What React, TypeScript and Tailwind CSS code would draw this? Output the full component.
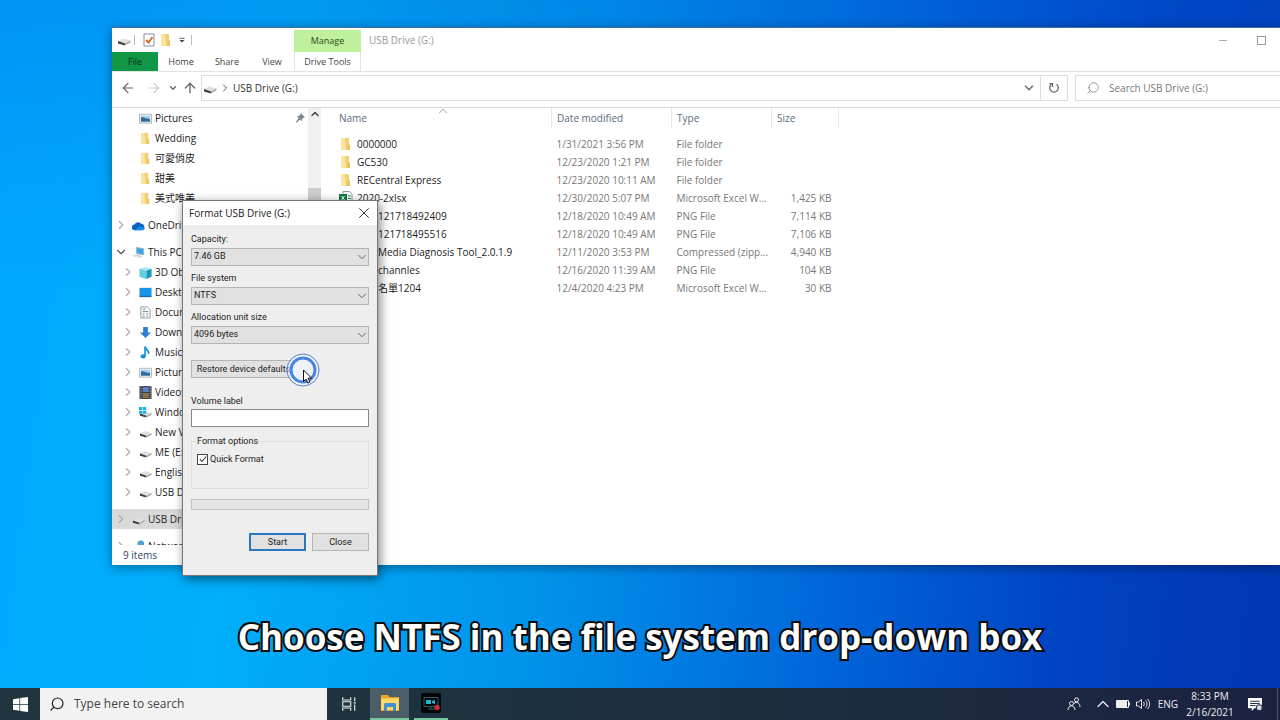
import type { ReactNode } from "react";
import { ArrowLeft, ArrowRight, ArrowUp, ChevronDown, ChevronRight, ChevronUp, Search, X } from "lucide-react";

type IconName =
  | "pictures"
  | "folder"
  | "cloud"
  | "pc"
  | "cube"
  | "desktop"
  | "document"
  | "download"
  | "music"
  | "video"
  | "windows"
  | "drive"
  | "network";

type TreeItem = {
  label: string;
  icon: IconName;
  level?: number;
  arrow?: "right" | "down";
  pinned?: boolean;
  active?: boolean;
  gap?: boolean;
};

const tree: TreeItem[] = [
  { label: "Pictures", icon: "pictures", level: 1, pinned: true },
  { label: "Wedding", icon: "folder", level: 1 },
  { label: "可愛俏皮", icon: "folder", level: 1 },
  { label: "甜美", icon: "folder", level: 1 },
  { label: "美式唯美", icon: "folder", level: 1 },
  { label: "OneDrive", icon: "cloud", arrow: "right", gap: true },
  { label: "This PC", icon: "pc", arrow: "down", gap: true },
  { label: "3D Objects", icon: "cube", level: 1, arrow: "right" },
  { label: "Desktop", icon: "desktop", level: 1, arrow: "right" },
  { label: "Documents", icon: "document", level: 1, arrow: "right" },
  { label: "Downloads", icon: "download", level: 1, arrow: "right" },
  { label: "Music", icon: "music", level: 1, arrow: "right" },
  { label: "Pictures", icon: "pictures", level: 1, arrow: "right" },
  { label: "Videos", icon: "video", level: 1, arrow: "right" },
  { label: "Windows", icon: "windows", level: 1, arrow: "right" },
  { label: "New Volume", icon: "drive", level: 1, arrow: "right" },
  { label: "ME (E:)", icon: "drive", level: 1, arrow: "right" },
  { label: "English", icon: "drive", level: 1, arrow: "right" },
  { label: "USB Drive", icon: "drive", level: 1, arrow: "right" },
  { label: "USB Drive", icon: "drive", arrow: "right", gap: true, active: true },
  { label: "Network", icon: "network", arrow: "right", gap: true },
];

type FileRow = {
  name: string;
  icon?: "folder" | "excel";
  date: string;
  type: string;
  size?: string;
};

// rows without an icon start behind the dialog
const files: FileRow[] = [
  { name: "0000000", icon: "folder", date: "1/31/2021 3:56 PM", type: "File folder" },
  { name: "GC530", icon: "folder", date: "12/23/2020 1:21 PM", type: "File folder" },
  { name: "RECentral Express", icon: "folder", date: "12/23/2020 10:11 AM", type: "File folder" },
  { name: "2020-2xlsx", icon: "excel", date: "12/30/2020 5:07 PM", type: "Microsoft Excel W...", size: "1,425 KB" },
  { name: "121718492409", date: "12/18/2020 10:49 AM", type: "PNG File", size: "7,114 KB" },
  { name: "121718495516", date: "12/18/2020 10:49 AM", type: "PNG File", size: "7,106 KB" },
  { name: "Media Diagnosis Tool_2.0.1.9", date: "12/11/2020 3:53 PM", type: "Compressed (zipp...", size: "4,940 KB" },
  { name: "channles", date: "12/16/2020 11:39 AM", type: "PNG File", size: "104 KB" },
  { name: "名單1204", date: "12/4/2020 4:23 PM", type: "Microsoft Excel W...", size: "30 KB" },
];

function Svg({ className, children }: { className: string; children: ReactNode }) {
  return (
    <svg viewBox="0 0 14 14" className={`shrink-0 ${className}`} fill="none" aria-hidden="true">
      {children}
    </svg>
  );
}

function DriveShape() {
  return (
    <>
      <path d="M1 8 6 5.500 13.500 7.500 8 10.500Z" fill="#e0e0e0" />
      <path d="M1 8 8 10.500V12.500L1 10.500Z" fill="#3c3c3c" />
      <path d="M8 10.500 13.500 7.500V9.500L8 12.500Z" fill="#aaa" />
    </>
  );
}

function Icon({ name, className = "size-3.5" }: { name: IconName; className?: string }) {
  switch (name) {
    case "pictures":
      return (
        <Svg className={className}>
          <path d="M.5 2.500h13v9.500H.5z" fill="#f4f8fb" stroke="#a9b4bc" />
          <path d="M2 4h10v3.500H2z" fill="#9fd0f0" />
          <path d="M2 6c3-1 4 1.500 10 1.500v3H2z" fill="#386b95" />
        </Svg>
      );
    case "folder":
      return (
        <Svg className={className}>
          <path d="M2.500 1h7.500v12H2.500z" fill="#f3cf73" />
          <path d="M2.500 1h3.500l1 12H2.500z" fill="#fbe3a0" />
          <path d="M9 7.500h2V13H8z" fill="#f0c45d" />
        </Svg>
      );
    case "cloud":
      return (
        <Svg className={className}>
          <path d="M3 12a3 3 0 0 1-.3-6A4.200 4.200 0 0 1 10 5.200 3.500 3.500 0 0 1 11 12Z" fill="#0a64c4" />
          <path d="M3 12 9 8l5 2a3 3 0 0 1-3 2Z" fill="#1d8ee6" />
        </Svg>
      );
    case "pc":
      return (
        <Svg className={className}>
          <path d="M5 1.500 12.500 3v6.500L5 8z" fill="#3fa3e8" stroke="#8fb4cc" />
          <path d="M0 10.500 5 9l6 2-4 2z" fill="#c3ccd2" />
          <path d="m3 10.500 5 1.500" stroke="#fff" />
        </Svg>
      );
    case "cube":
      return (
        <Svg className={className}>
          <path d="M.5 3 7 1l6.500 2L8 5z" fill="#a8eaf2" />
          <path d="M.5 3 8 5v9L.5 11.500z" fill="#63cfe0" />
          <path d="M8 5l5.500-2v8.500L8 14z" fill="#1798b5" />
        </Svg>
      );
    case "desktop":
      return (
        <Svg className={className}>
          <path d="M.5 2h13v9H.5z" fill="#1795e6" />
          <path d="M.5 10.500h13V12H.5z" fill="#1269b0" />
        </Svg>
      );
    case "document":
      return (
        <Svg className={className}>
          <path d="M2 1h7l3 3v9H2z" fill="#f8fafb" stroke="#8e999f" />
          <path d="M4 3.500h3M4 6h6M4 8.500h2m2 0h2m-6 2.500h2m2 0h2" stroke="#6c8798" />
        </Svg>
      );
    case "download":
      return (
        <Svg className={className}>
          <path d="M4.500 1h5v6H13l-6 6-6-6h3.500z" fill="#2c7fd0" />
        </Svg>
      );
    case "music":
      return (
        <Svg className={className}>
          <path d="M6.500 11V.5C7 4.500 12 4.500 10 8.500" stroke="#1591d8" strokeWidth="1.800" />
          <ellipse cx="4.500" cy="11.200" rx="2.800" ry="2.300" fill="#1591d8" />
        </Svg>
      );
    case "video":
      return (
        <Svg className={className}>
          <path d="M.5 0h13v14H.5z" fill="#3c3f4a" />
          <path d="M4 1h6.500v5.500H4z" fill="#5b7fc0" />
          <path d="M4 7.500h6.500V13H4z" fill="#8b7448" />
          <path d="M2.200 0v14m9.800-14v14" stroke="#d8d8d8" strokeDasharray="1 1.500" />
        </Svg>
      );
    case "windows":
      return (
        <Svg className={className}>
          <DriveShape />
          <path d="M0 1h3.500v3.300H0zM4.200 1h3.500v3.300H4.200zM0 5h3.500v3.300H0zM4.200 5h3.500v3.300H4.200z" fill="#12b2ea" />
        </Svg>
      );
    case "network":
      return (
        <Svg className={className}>
          <path d="M6 3.500a3.500 3.500 0 0 1 7 1V10H6z" fill="#4a9fd4" />
          <path d="M1 5.500 8 7v6L1 11.500z" fill="#2a86c6" />
        </Svg>
      );
    default:
      return (
        <Svg className={className}>
          <DriveShape />
        </Svg>
      );
  }
}

function ExcelIcon() {
  return (
    <Svg className="size-3.5">
      <path d="M4 .5h6.500L13 3v10H4z" fill="#fff" stroke="#8ca096" />
      <path d="M9 5h3M9 7.500h3M9 10h3" stroke="#2c8a5b" />
      <path d="M0 3h8v8H0z" fill="#107c41" />
      <path d="m2.500 5 3 4m0-4-3 4" stroke="#fff" />
    </Svg>
  );
}

function RibbonHeader() {
  return (
    <header className="text-[9px] text-[#444]">
      <div className="flex h-6 items-center">
        <div className="flex h-full w-[182px] items-center gap-[3px] pl-[5px]">
          <Icon name="drive" />
          <span className="h-2.5 w-px bg-[#bbb]" />
          <button className="ml-1" aria-label="Properties">
            <Svg className="size-3.5">
              <path d="M2 1h10v12H2z" fill="#fff" stroke="#8a8f98" />
              <path d="m4 7 2.500 2.500L10.500 4" stroke="#d9622b" strokeWidth="1.800" />
            </Svg>
          </button>
          <button aria-label="New folder">
            <Icon name="folder" />
          </button>
          <button aria-label="Customize Quick Access Toolbar">
            <Svg className="size-3">
              <path d="M4 5h6" stroke="#444" />
              <path d="M4 7h6l-3 3z" fill="#444" />
            </Svg>
          </button>
          <span className="h-2.5 w-px bg-[#bbb]" />
        </div>
        <div className="flex h-[22px] w-[67px] items-center justify-center self-end bg-[#bff09b] text-[#2f4a22]">Manage</div>
        <h1 className="ml-2 text-[10px] text-[#999]">USB Drive (G:)</h1>
        <div className="ml-auto flex">
          <button className="grid h-6 w-[38px] place-items-center" aria-label="Minimize">
            <span className="h-px w-2 bg-[#aaa]" />
          </button>
          <button className="grid h-6 w-[38px] place-items-center" aria-label="Maximize">
            <span className="size-[9px] border border-[#999]" />
          </button>
        </div>
      </div>
      <nav className="flex h-5 border-b border-[#e3e3e3]">
        <button className="w-[46px] bg-[#119645] text-[#0b2d17]">File</button>
        <button className="w-[46px]">Home</button>
        <button className="w-[46px]">Share</button>
        <button className="w-11">View</button>
        <button className="w-[67px] border-x border-[#e3e3e3]">Drive Tools</button>
      </nav>
    </header>
  );
}

function AddressBar() {
  return (
    <div className="flex h-9 items-center border-b border-[#d9d9d9] pb-[3px] text-[10px]">
      <div className="flex w-[89px] items-center pl-2 text-[#666]">
        <button aria-label="Back">
          <ArrowLeft className="size-4" strokeWidth={1.8} />
        </button>
        <button className="ml-2.5 text-[#ccc]" aria-label="Forward">
          <ArrowRight className="size-4" strokeWidth={1.8} />
        </button>
        <button className="ml-1.5" aria-label="Recent locations">
          <ChevronDown className="size-2.5" strokeWidth={3} />
        </button>
        <button className="ml-1" aria-label="Up">
          <ArrowUp className="size-4" strokeWidth={2} />
        </button>
      </div>
      <div className="flex h-[26px] flex-1 items-center border border-[#dedede] pl-px text-[#333]">
        <Icon name="drive" />
        <ChevronRight className="ml-0.5 size-3 text-[#555]" />
        <button className="ml-0.5">USB Drive (G:)</button>
        <button className="ml-auto mr-1" aria-label="Previous locations">
          <ChevronDown className="size-3.5 text-[#777]" strokeWidth={3} />
        </button>
        <button className="grid h-full w-[27px] place-items-center border-l border-[#dedede]" aria-label="Refresh">
          <Svg className="size-3.5">
            <path d="M9.500 3.300a4.300 4.300 0 1 1-5 0" stroke="#666" strokeWidth="1.300" />
            <path d="M2.500 2.700H5.500V6" stroke="#666" strokeWidth="1.300" />
          </Svg>
        </button>
      </div>
      <label className="ml-[7px] flex h-[26px] w-[205px] items-center border border-r-0 border-[#dedede] pl-2.5">
        <Search className="size-3.5 -scale-x-100 text-[#888]" strokeWidth={1.5} />
        <input
          className="ml-[9px] w-40 outline-none placeholder:text-[#777]"
          aria-label="Search USB Drive (G:)"
          placeholder="Search USB Drive (G:)"
        />
      </label>
    </div>
  );
}

function TreeRow({ item }: { item: TreeItem }) {
  return (
    <li
      className={`flex h-5 shrink-0 items-center whitespace-nowrap ${item.level ? "pl-[9px]" : "pl-0.5"} ${item.gap ? "mt-[7px]" : ""} ${
        item.active ? "bg-[#d9d9d9]" : ""
      }`}
    >
      <span className="flex w-[18px] text-[#aaa]">
        {item.arrow === "right" && <ChevronRight className="size-3.5" />}
        {item.arrow === "down" && <ChevronDown className="size-3.5 text-[#555]" />}
      </span>
      <Icon name={item.icon} className="size-[13px]" />
      <span className="ml-[3px]">{item.label}</span>
      {item.pinned && (
        <Svg className="ml-auto mr-[3px] size-2.5">
          <path d="M8 0 14 6l-2 .5-2 2-.5 3L7 9l-5.500 5L1 13l4-6-2.500-2.500L6 4l1.500-2z" fill="#7c8794" />
        </Svg>
      )}
    </li>
  );
}

function Sidebar() {
  return (
    <aside className="flex w-[209px] shrink-0 overflow-hidden text-[#222]">
      <ul className="flex w-[196px] flex-col">
        {tree.map((item, i) => (
          <TreeRow key={i} item={item} />
        ))}
      </ul>
      <div className="flex w-[13px] flex-col items-center bg-[#f0f0f0]">
        <ChevronUp className="size-3 text-[#444]" strokeWidth={3} />
        <span className="mt-[68px] h-40 w-full bg-[#cdcdcd]" />
      </div>
    </aside>
  );
}

function FileTable() {
  return (
    <main className="flex-1">
      <table className="w-[518px] table-fixed text-left text-[#777]">
        <colgroup>
          <col />
          <col className="w-[120px]" />
          <col className="w-[100px]" />
          <col className="w-[67px]" />
        </colgroup>
        <thead>
          <tr className="h-5 text-[#5a6b80]">
            <th className="relative border-r border-[#e8e8e8] pl-[18px] font-normal">
              Name
              <ChevronUp className="absolute -top-1 left-[115px] size-3.5 text-[#888]" strokeWidth={1.5} />
            </th>
            <th className="border-r border-[#e8e8e8] pl-[5px] font-normal">Date modified</th>
            <th className="border-r border-[#e8e8e8] pl-[5px] font-normal">Type</th>
            <th className="border-r border-[#e8e8e8] pl-[5px] font-normal">Size</th>
          </tr>
          <tr className="h-[7px]" />
        </thead>
        <tbody>
          {files.map((file) => (
            <tr key={file.name} className="h-[18px] whitespace-nowrap">
              <td className="text-[#222]">
                <div className={`flex items-center ${file.icon ? "gap-1 pl-[18px]" : "pl-[57px]"}`}>
                  {file.icon === "folder" && <Icon name="folder" />}
                  {file.icon === "excel" && <ExcelIcon />}
                  {file.name}
                </div>
              </td>
              <td className="pl-[5px]">{file.date}</td>
              <td className="pl-[5px]">{file.type}</td>
              <td className="pr-[7px] text-right">{file.size}</td>
            </tr>
          ))}
        </tbody>
      </table>
    </main>
  );
}

function ExplorerWindow() {
  return (
    <section className="absolute bottom-[123px] left-28 right-0 top-[27px] flex flex-col border-t border-[#3a6ea8] bg-white text-[10px] shadow-[0_2px_10px_rgba(0,0,0,0.4)]">
      <RibbonHeader />
      <AddressBar />
      <div className="flex min-h-0 flex-1">
        <Sidebar />
        <FileTable />
      </div>
      <footer className="flex h-5 items-center pl-[11px] text-[#2f4668]">9 items</footer>
    </section>
  );
}

function SelectField({ id, label, value }: { id: string; label: string; value: string }) {
  return (
    <div className="mb-1.5">
      <label htmlFor={id} className="block leading-3">
        {label}
      </label>
      <div className="mt-[3px] grid items-center">
        <select id={id} className="col-start-1 row-start-1 h-[18px] appearance-none border border-[#b5b5b5] bg-[#e1e1e1] pl-0.5">
          <option>{value}</option>
        </select>
        <ChevronDown className="pointer-events-none col-start-1 row-start-1 size-3.5 justify-self-end text-[#555]" strokeWidth={1.5} />
      </div>
    </div>
  );
}

function FormatDialog() {
  return (
    <section
      role="dialog"
      aria-label="Format USB Drive (G:)"
      className="absolute left-[182px] top-[200px] w-[196px] border border-[#777] bg-[#eee] text-[#222] shadow-[2px_3px_10px_rgba(0,0,0,0.5)]"
    >
      <div className="flex h-6 items-center justify-between bg-white pl-1.5 pr-1 text-[10px]">
        <h2>Format USB Drive (G:)</h2>
        <button aria-label="Close dialog">
          <X className="size-[18px]" strokeWidth={1.2} />
        </button>
      </div>
      <form className="px-2 pb-6 pt-2 font-[Roboto,sans-serif] text-[9px]">
        <SelectField id="capacity" label="Capacity:" value="7.46 GB" />
        <SelectField id="file-system" label="File system" value="NTFS" />
        <SelectField id="unit-size" label="Allocation unit size" value="4096 bytes" />
        <button type="button" className="mt-2.5 h-[18px] w-[105px] whitespace-nowrap border border-[#b5b5b5] bg-[#e1e1e1] leading-4">
          Restore device defaults
        </button>
        <label htmlFor="volume" className="mt-[17px] block leading-3">
          Volume label
        </label>
        <input id="volume" className="mt-0.5 h-[18px] w-full border border-[#888] bg-white px-1" />
        <fieldset className="mt-2 h-[54px] border border-[#dedede] pl-[5px]">
          <legend className="leading-3">Format options</legend>
          <label className="mt-1.5 flex items-center gap-0.5 leading-3">
            <span className="grid place-items-center">
              <input type="checkbox" defaultChecked className="col-start-1 row-start-1 size-[11px] appearance-none border border-[#444] bg-white" />
              <Svg className="pointer-events-none col-start-1 row-start-1 size-2.5">
                <path d="m2.500 7 3 3.500 6-7" stroke="#333" strokeWidth="1.500" />
              </Svg>
            </span>
            Quick Format
          </label>
        </fieldset>
        <div role="progressbar" aria-label="Format progress" className="mt-2.5 h-[11px] border border-[#c4c4c4] bg-[#e4e4e4]" />
        <div className="mt-[23px] flex justify-end gap-1.5">
          <button type="button" className="h-[18px] w-[57px] border-2 border-[#2a77c0] bg-[#e1e1e1] leading-3">
            Start
          </button>
          <button type="button" className="h-[18px] w-[57px] border border-[#b5b5b5] bg-[#e1e1e1] leading-3">
            Close
          </button>
        </div>
      </form>
    </section>
  );
}

function ClickCursor() {
  return (
    <svg viewBox="0 0 36 36" className="absolute left-[285px] top-[352px] size-9" fill="none" aria-hidden="true">
      <circle cx="18" cy="18" r="16" fill="#fff" fillOpacity="0.5" stroke="#4a7fd4" />
      <circle cx="18" cy="18" r="12" fill="#edf1fa" stroke="#4a84e4" strokeWidth="3" />
      <path d="M18.500 18v11.500l2.600-2.400 1.800 4 2-1-1.800-3.900h3.600z" fill="#fff" stroke="#111" />
    </svg>
  );
}

function Taskbar() {
  return (
    <footer className="flex h-8 items-center bg-linear-to-r from-[#20353f] via-[#1e3040] to-[#1a2240] text-[#eee]">
      <button className="grid w-10 place-items-center" aria-label="Start menu">
        <Svg className="size-[15px]">
          <path d="M0 2 6 1.100v5.400H0zM6.700 1 14 0v6.500H6.700zM0 7.300h6v5.500L0 12zM6.700 7.300H14V14l-7.300-1z" fill="#fff" />
        </Svg>
      </button>
      <label className="flex h-full w-[287px] items-center bg-[#f2f2f2] pl-[9px]">
        <Search className="size-4 -scale-x-100 text-[#222]" strokeWidth={1.8} />
        <input
          className="ml-[9px] w-56 text-[12px] outline-none placeholder:text-[#444]"
          aria-label="Type here to search"
          placeholder="Type here to search"
        />
      </label>
      <button className="grid w-[43px] place-items-center" aria-label="Task view">
        <Svg className="size-4">
          <path d="M1.500 1v2.500h7V1M1.500 5h7v4h-7zM1.500 13v-2.500h7V13M12 1v3.500M12 7.500V13M11 6h2" stroke="#e8e8e8" />
        </Svg>
      </button>
      <button className="grid h-full w-[39px] place-items-center border-b-2 border-[#76c79c] bg-[#4b5d67]" aria-label="File Explorer">
        <svg viewBox="0 0 18 16" className="h-4 w-[18px]" aria-hidden="true">
          <path d="M0 0h7l1.500 2H18v14H0z" fill="#e9a823" />
          <path d="M0 3.500h18V15H0z" fill="#ffd968" />
          <path d="M3 9.500A1.500 1.500 0 0 1 4.500 8h9A1.500 1.500 0 0 1 15 9.500V16h-3v-4H6v4H3z" fill="#3f8fd2" />
        </svg>
      </button>
      <button className="ml-[5px] grid h-full w-[34px] place-items-center border-b-2 border-[#76c79c]" aria-label="RECentral">
        <svg viewBox="0 0 20 20" className="size-5" fill="none" aria-hidden="true">
          <rect width="20" height="20" rx="2" fill="#050608" />
          <path d="M3 4.500h14v9H3zM7 16h6M10 13.500V16" stroke="#33596e" />
          <path d="M5 7h5v4H5zM11 8l3-1v4l-3-1z" fill="#22b5d0" />
          <circle cx="16" cy="14.500" r="2.800" fill="#c2313c" />
        </svg>
      </button>
      <div className="ml-auto flex h-full items-center text-[10px]">
        <button aria-label="People">
          <Svg className="size-3.5">
            <circle cx="9.500" cy="2.800" r="2" stroke="#eee" />
            <circle cx="4.500" cy="6.500" r="2" stroke="#eee" />
            <path d="M1 13c0-5.500 7-5.500 7 0M7 6.500c2.500-2.500 6-.5 6 3.500" stroke="#eee" />
          </Svg>
        </button>
        <button className="ml-3" aria-label="Show hidden icons">
          <ChevronUp className="size-5" strokeWidth={1.5} />
        </button>
        <Svg className="ml-[3px] size-3.5">
          <path d="M.5 3.500h12v7H.5z" stroke="#eee" />
          <path d="M1 4h10v6H1zM13 5.500h1v3h-1z" fill="#eee" />
        </Svg>
        <Svg className="ml-1.5 size-3.5">
          <path d="M.5 5h2L5.500 2.500v9L2.500 9h-2zM7.500 5c1 1.500 1 2.500 0 4M9.500 3.500c2 2.500 2 4.500 0 7M11.500 2c3 3.500 3 6.500 0 10" stroke="#eee" />
        </Svg>
        <span className="ml-2">ENG</span>
        <time className="ml-2 w-12 whitespace-nowrap text-center leading-4">
          8:33 PM
          <br />
          2/16/2021
        </time>
        <button className="ml-3.5" aria-label="Notifications">
          <Svg className="size-[15px]">
            <path d="M0 1h13v9.500H6L3.500 13v-2.500H0z" fill="#fff" />
            <path d="M2 4h9M2 6h9M2 8h5" stroke="#26334a" />
            <circle cx="10.500" cy="10" r="2.800" fill="#d8dbe0" stroke="#26334a" />
          </Svg>
        </button>
        <span className="ml-3.5 mr-0.5 h-full w-px bg-[#4a5368]" />
      </div>
    </footer>
  );
}

export default function App() {
  return (
    <div className="flex h-screen flex-col overflow-hidden bg-[linear-gradient(180deg,rgba(0,90,215,0.25)_0%,rgba(0,90,215,0)_40%),linear-gradient(98deg,#00a8ff_0%,#00aefa_22%,#0093ea_45%,#0062d8_68%,#0042c2_84%,#0036b0_100%)] font-['Open_Sans','Noto_Sans_CJK_TC',sans-serif]">
      <div className="relative flex flex-1 flex-col justify-end">
        <ExplorerWindow />
        <FormatDialog />
        <ClickCursor />
        <p className="mb-6 text-center text-[35px] font-bold leading-[54px] text-white [-webkit-text-stroke:4px_#0a0a0a] [paint-order:stroke_fill]">
          Choose NTFS in the file system drop-down box
        </p>
      </div>
      <Taskbar />
    </div>
  );
}
